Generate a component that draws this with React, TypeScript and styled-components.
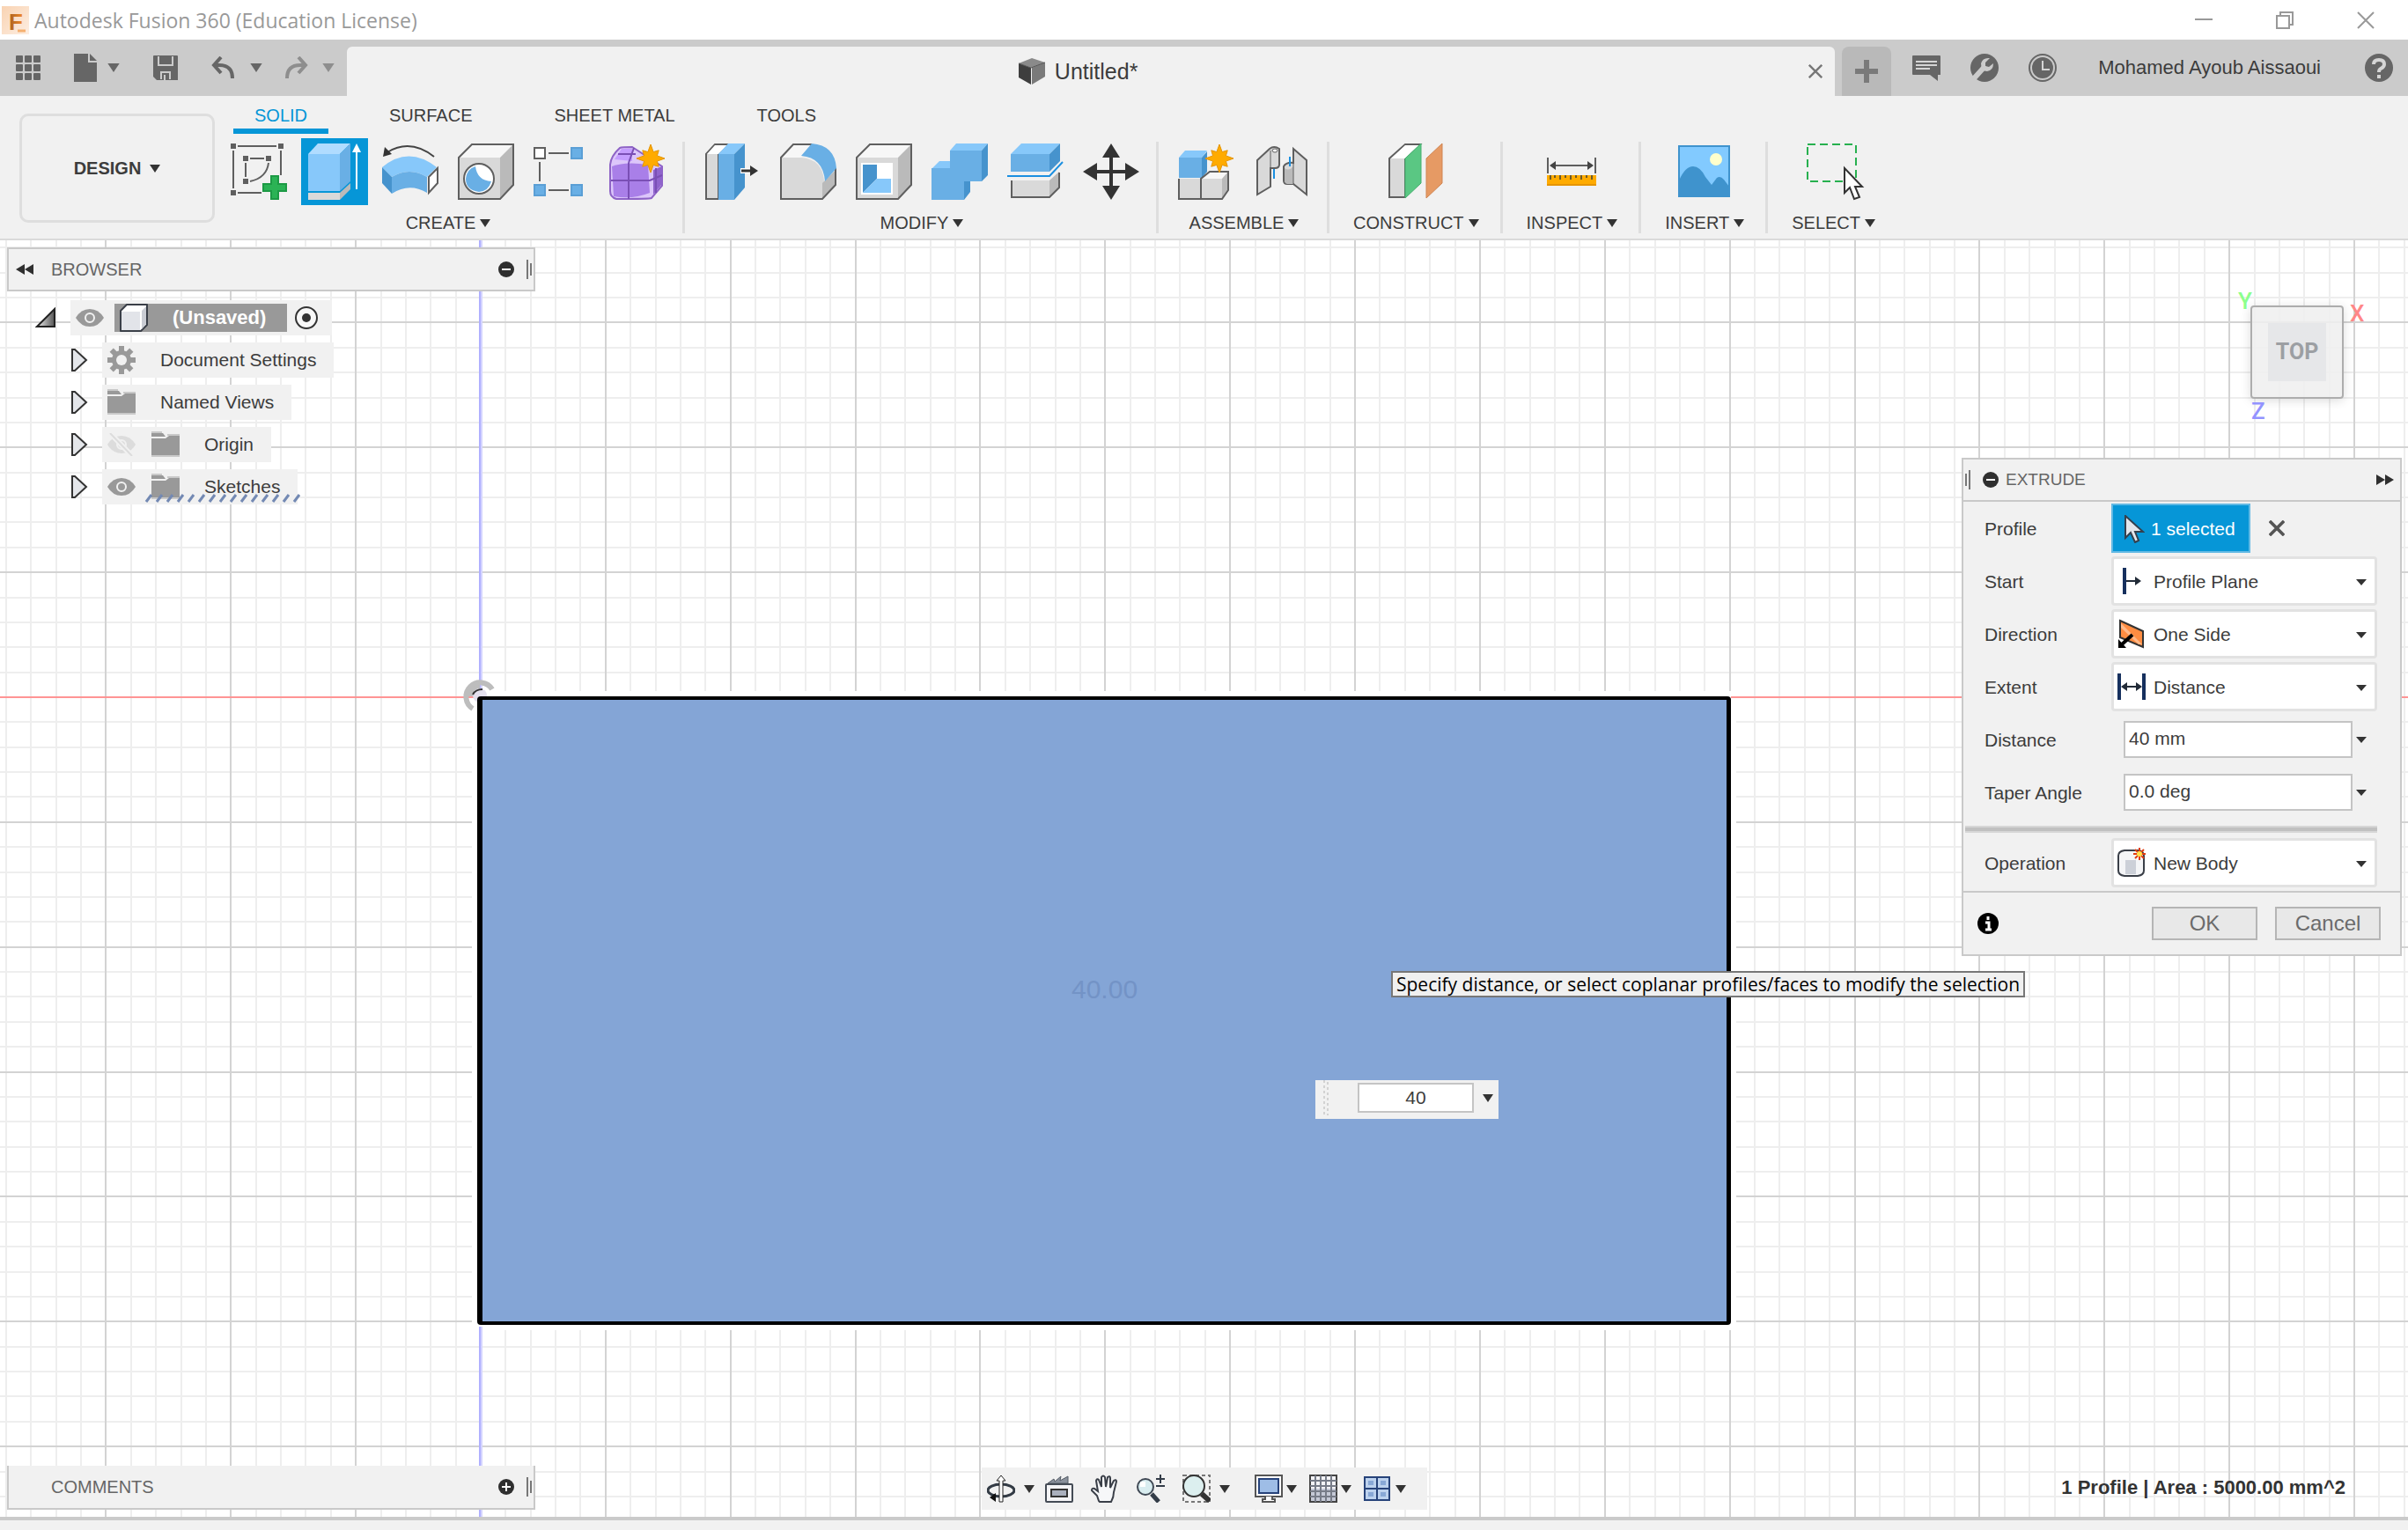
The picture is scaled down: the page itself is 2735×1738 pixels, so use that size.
import React from 'react';
import styled, { createGlobalStyle, css } from 'styled-components';

const ACCENT = '#0696d7';
const PANEL = '#f1f1f1';
const EDGE = '#c9c9c9';
const INK = '#3c3c3c';
const SANS = '"Liberation Sans", Arial, sans-serif';

const GlobalStyle = createGlobalStyle`
  *, *::before, *::after { box-sizing: border-box; }
  body { margin: 0; background: ${PANEL}; }
  button, input, select { font: inherit; color: inherit; }
  button { border: 0; padding: 0; background: none; cursor: pointer; }
  svg { display: block; flex: none; }
`;

/* ---------- shell ---------- */

const Shell = styled.div`
  display: flex;
  flex-direction: column;
  min-height: 100vh;
  font-family: ${SANS};
  font-size: 21px;
  line-height: 24px;
  color: ${INK};
  overflow: hidden;
`;

const TitleBar = styled.header`
  display: flex;
  align-items: center;
  height: 45px;
  padding: 0 2px;
  background: #fff;
  color: #999;
`;

const AppTitle = styled.h1`
  flex: 1;
  margin: 0 0 0 6px;
  font: 400 23px/30px "Open Sans", "Noto Sans", sans-serif;
`;

const WindowButton = styled.button`
  display: grid;
  place-items: center;
  width: 92px;
  height: 42px;
`;

const TabStrip = styled.div`
  display: flex;
  align-items: flex-end;
  height: 64px;
  background: #cbcbcb;
`;

const QuickBar = styled.nav`
  display: flex;
  align-items: center;
  width: 394px;
  height: 64px;
  padding-left: 18px;
  color: #666;
`;

const QuickButton = styled.button<{ $gap: number; $faded?: boolean }>`
  display: grid;
  place-items: center;
  margin-right: ${(p) => p.$gap}px;
  color: ${(p) => (p.$faded ? '#8e8e8e' : '#666')};
`;

const DocumentTab = styled.div`
  flex: 1;
  display: flex;
  align-items: center;
  height: 56px;
  padding: 0 14px 0 0;
  border-radius: 6px 6px 0 0;
  background: ${PANEL};
  font-size: 25px;
  line-height: 28px;
`;

const DocumentName = styled.div`
  flex: 1;
  display: flex;
  align-items: center;
  justify-content: center;
  gap: 10px;
`;

const NewTab = styled.button`
  display: grid;
  place-items: center;
  width: 56px;
  height: 56px;
  margin-left: 8px;
  border-radius: 8px 8px 0 0;
  background: #b9b9b9;
`;

const AccountBar = styled.div`
  display: flex;
  align-items: center;
  height: 64px;
  padding: 0 17px 0 24px;
  color: ${INK};
`;

const AccountIcons = styled.div`
  display: flex;
  gap: 34px;
  margin-right: 47px;
`;

const AccountName = styled.button`
  margin-right: 50px;
  font-size: 22px;
`;

/* ---------- ribbon ---------- */

const Ribbon = styled.section`
  display: flex;
  height: 164px;
  padding-left: 22px;
  border-bottom: 2px solid #dadada;
  background: ${PANEL};
`;

const WorkspaceButton = styled.button`
  display: flex;
  align-items: center;
  justify-content: center;
  gap: 10px;
  width: 222px;
  height: 124px;
  margin: 20px 12px 0 0;
  border: 3px solid #dedede;
  border-radius: 10px;
  font-size: 20px;
  font-weight: 700;
`;

const RibbonBody = styled.div`
  display: flex;
  flex-direction: column;
`;

const RibbonTabs = styled.nav`
  display: flex;
  gap: 45px;
  height: 48px;
  padding: 8px 0 0 9px;
`;

const RibbonTab = styled.button<{ $active?: boolean }>`
  height: 35px;
  padding: 0 24px 2px;
  border-bottom: 6px solid ${(p) => (p.$active ? ACCENT : 'transparent')};
  color: ${(p) => (p.$active ? ACCENT : INK)};
  font-size: 20px;
  line-height: 20px;
`;

const ToolGroups = styled.div`
  display: flex;
`;

const ToolGroup = styled.div`
  display: flex;
  flex-direction: column;
  align-items: center;
  gap: 8px;
  padding: 0 16px;
  background: linear-gradient(#dedede, #dedede) right 4px / 3px 104px no-repeat;

  &:first-child { padding-left: 0; }
  &:last-child { background: none; }
`;

const ToolRow = styled.div`
  display: flex;
  gap: 10px;
`;

const ToolButton = styled.button<{ $active?: boolean }>`
  display: grid;
  place-items: center;
  width: 76px;
  height: 76px;
  background: ${(p) => (p.$active ? ACCENT : 'transparent')};
`;

const GroupLabel = styled.button`
  display: flex;
  align-items: center;
  gap: 5px;
  padding: 0 11px;
  font-size: 20px;
  line-height: 24px;
`;

/* ---------- canvas ---------- */

const Canvas = styled.main`
  position: relative;
  flex: 1;
  background: #fff;
  overflow: hidden;
`;

const Drawing = styled.svg`
  position: absolute;
  inset: 0;
  width: 100%;
  height: 100%;
`;

const Overlay = styled.div`
  position: relative;
  display: flex;
  justify-content: space-between;
  padding: 8px 7px 0 8px;
`;

const BrowserColumn = styled.aside`
  width: 600px;
`;

const panelBar = css`
  display: flex;
  align-items: center;
  height: 50px;
  border: 2px solid ${EDGE};
  background: ${PANEL};
  color: #666;
  font-size: 20px;
`;

const BrowserHeader = styled.header`
  ${panelBar}
  padding: 0 2px 0 8px;
`;

const PanelTitle = styled.h2<{ $left: number; $size?: number }>`
  flex: 1;
  margin: 0 0 0 ${(p) => p.$left}px;
  font-size: ${(p) => p.$size ?? 20}px;
  font-weight: 400;
`;

const Spaced = styled.span`
  margin-left: 14px;
`;

const Tree = styled.ul`
  display: flex;
  flex-direction: column;
  align-items: flex-start;
  gap: 8px;
  margin: 0;
  padding: 10px 0 0;
  list-style: none;
`;

const TreeItem = styled.li<{ $indent: number }>`
  display: flex;
  align-items: center;
  height: 40px;
  padding-left: ${(p) => p.$indent}px;
`;

const TreeToggle = styled.button`
  margin-right: 16px;
`;

const TreeBody = styled.div`
  position: relative;
  display: flex;
  align-items: center;
  gap: 18px;
  height: 40px;
  padding: 0 20px 0 6px;
  background: ${PANEL};
`;

const TreeLabel = styled.span`
  padding-left: 10px;
`;

const RootBody = styled(TreeBody)`
  gap: 9px;
  padding-right: 16px;
`;

const RootName = styled.button`
  display: flex;
  align-items: center;
  gap: 28px;
  width: 196px;
  height: 32px;
  padding-left: 6px;
  margin-left: 3px;
  background: #999;
  color: #fff;
  font-size: 22px;
  font-weight: 700;
`;

const Hatch = styled.svg`
  position: absolute;
  left: 48px;
  bottom: 2px;
`;

const RightColumn = styled.aside`
  display: flex;
  flex-direction: column;
  align-items: flex-end;
  width: 500px;
`;

const CubeArea = styled.div`
  position: relative;
  width: 106px;
  height: 106px;
  margin: 66px 66px 67px 0;
`;

const CubeFace = styled.button`
  display: grid;
  place-items: center;
  width: 106px;
  height: 106px;
  border: 2px solid #adadad;
  border-radius: 4px;
  background: rgba(238, 238, 238, 0.85);
  box-shadow: 0 2px 12px rgba(0, 0, 0, 0.14);
  color: #9c9fa3;
  font: 700 25px/30px Roboto, sans-serif;
`;

const CubeCenter = styled.span`
  display: grid;
  place-items: center;
  width: 66px;
  height: 66px;
  background: #e6e7e9;
`;

const AxisLetter = styled.span<{ $x: number; $y: number; $color: string }>`
  position: absolute;
  left: ${(p) => p.$x}px;
  top: ${(p) => p.$y}px;
  color: ${(p) => p.$color};
  font: 500 26px/28px Roboto, sans-serif;
`;

/* ---------- extrude dialog ---------- */

const Dialog = styled.form`
  width: 500px;
  border: 2px solid ${EDGE};
  background: ${PANEL};
`;

const DialogHeader = styled.header`
  display: flex;
  align-items: center;
  height: 48px;
  padding: 0 7px 0 2px;
  border-bottom: 2px solid ${EDGE};
  color: #666;
`;

const Fields = styled.div`
  display: flex;
  flex-direction: column;
  gap: 4px;
  padding: 2px 26px 4px 24px;
`;

const Field = styled.div`
  display: grid;
  grid-template-columns: 144px 1fr;
  align-items: center;
  height: 56px;
`;

const fieldText = css`
  padding-top: 2px;
`;

const FieldLabel = styled.label`
  ${fieldText}
`;

const FieldName = styled.span`
  ${fieldText}
`;

const Inline = styled.div`
  display: flex;
  align-items: center;
`;

const SelectedButton = styled.button`
  display: flex;
  align-items: center;
  gap: 7px;
  width: 158px;
  height: 56px;
  margin-right: 21px;
  padding: 2px 0 0 12px;
  border: 2px solid #62b9e4;
  background: ${ACCENT};
  color: #fff;
`;

const SelectBox = styled.div`
  position: relative;
  height: 56px;
`;

const NativeSelect = styled.select`
  appearance: none;
  width: 100%;
  height: 56px;
  padding: 2px 40px 0 45px;
  border: 3px solid #e2e2e2;
  border-radius: 4px;
  background: #fff;
`;

const SelectIcon = styled.span`
  position: absolute;
  left: 7px;
  top: 12px;
  pointer-events: none;
`;

const SelectCaret = styled.span`
  position: absolute;
  right: 12px;
  top: 26px;
  pointer-events: none;
`;

const ValueInput = styled.input`
  width: 260px;
  height: 42px;
  margin: 0 4px 0 14px;
  padding: 0 4px 2px;
  border: 2px solid #c4c4c4;
  background: #fff;
`;

const SectionRule = styled.hr`
  width: 468px;
  height: 8px;
  margin: 6px 0 2px -22px;
  border: 2px solid #d6d6d6;
  border-width: 2px 0;
  background: #c0c0c0;
`;

const DialogFooter = styled.footer`
  display: flex;
  align-items: center;
  gap: 20px;
  height: 72px;
  padding: 0 22px 0 16px;
  border-top: 2px solid ${EDGE};
`;

const Spacer = styled.span`
  flex: 1;
`;

const DialogButton = styled.button`
  width: 120px;
  height: 38px;
  border: 2px solid #b5b5b5;
  background: #e8e8e8;
  color: #6b6b6b;
  font-size: 24px;
  line-height: 26px;
`;

/* ---------- items placed on the free canvas ---------- */

const Pinned = styled.div<{ $x: number; $y: number }>`
  position: absolute;
  left: ${(p) => p.$x}px;
  top: ${(p) => p.$y}px;
`;

const DimensionText = styled(Pinned)`
  color: #7393c6;
  font-size: 30px;
  line-height: 34px;
`;

const Hint = styled(Pinned)`
  padding: 0 4px;
  border: 2px solid #777;
  background: #f0f0f0;
  color: #000;
  font: 21px/26px "Open Sans", "Noto Sans", sans-serif;
  white-space: nowrap;
`;

const QuickValue = styled(Pinned)`
  display: flex;
  align-items: center;
  gap: 10px;
  height: 44px;
  padding: 0 6px 4px 8px;
  background: ${PANEL};
`;

const QuickInput = styled.input`
  width: 132px;
  height: 34px;
  margin-left: 22px;
  border: 2px solid #c4c4c4;
  background: #fff;
  text-align: center;
`;

/* ---------- bottom of the canvas ---------- */

const BottomBar = styled.div`
  position: absolute;
  left: 8px;
  right: 8px;
  bottom: 8px;
  display: grid;
  grid-template-columns: 1fr auto 1fr;
  align-items: end;
`;

const CommentsPanel = styled.section`
  ${panelBar}
  width: 600px;
  padding: 0 2px 0 48px;
  border-top-width: 0;
`;

const NavBar = styled.nav`
  display: flex;
  align-items: center;
  height: 48px;
  padding: 0 24px 0 6px;
  background: ${PANEL};
`;

const NavButton = styled.button<{ $gap: number }>`
  margin-right: ${(p) => p.$gap}px;
`;

const StatusText = styled.output`
  justify-self: end;
  align-self: center;
  margin-right: 63px;
  color: #333;
  font-size: 22px;
  font-weight: 700;
`;

const BottomEdge = styled.div`
  height: 15px;
  border-top: 4px solid #cacaca;
  background: ${PANEL};
`;

/* ---------- small icons ---------- */

const Caret = ({ color = '#333', w = 12, h = 9 }: { color?: string; w?: number; h?: number }) => (
  <svg width={w} height={h} viewBox="0 0 12 9"><path d="M0 0H12L6 9Z" fill={color} /></svg>
);

const FlatCaret = () => (
  <svg width="12" height="7" viewBox="0 0 12 7"><path d="M0 0H12L6 7Z" fill="#333" /></svg>
);

const AppLogo = () => (
  <svg width="31" height="32" viewBox="0 0 31 32">
    <defs>
      <linearGradient id="logoBg" x1="0" y1="0" x2="1" y2="1">
        <stop offset="0" stopColor="#f9d3b2" /><stop offset="1" stopColor="#fdeee2" />
      </linearGradient>
      <linearGradient id="logoInk" x1="0" y1="0" x2="1" y2="0">
        <stop offset="0" stopColor="#a9601f" /><stop offset="1" stopColor="#f08a2c" />
      </linearGradient>
    </defs>
    <rect width="31" height="32" fill="url(#logoBg)" />
    <text x="8" y="27" fontFamily="Liberation Sans" fontSize="26" fontWeight="700" fill="url(#logoInk)">F</text>
    <path d="M18 28H27" stroke="#f5b070" strokeWidth="3" />
  </svg>
);

const GridIcon = () => (
  <svg width="28" height="28" viewBox="0 0 28 28" fill="#666">
    {[0, 10, 20].map((x) => [0, 10, 20].map((y) => <rect key={`${x}-${y}`} x={x} y={y} width="8" height="8" rx="1" />))}
  </svg>
);
const FileIcon = () => (
  <svg width="26" height="32" viewBox="0 0 26 32" fill="#666"><path d="M0 0H16V10H26V32H0Z" /><path d="M18 0L26 8H18Z" /></svg>
);
const SaveIcon = () => (
  <svg width="28" height="28" viewBox="0 0 28 28">
    <path d="M1 0H27Q28 0 28 1V28H4L0 24V1Q0 0 1 0Z" fill="#666" />
    <path d="M6 1V11H22V1M9 27V19H19V27" fill="none" stroke="#cbcbcb" strokeWidth="2" /><path d="M13 22V28" stroke="#cbcbcb" strokeWidth="2" />
  </svg>
);
const UndoIcon = ({ flip }: { flip?: boolean }) => (
  <svg width="26" height="26" viewBox="0 0 26 26" fill="none" stroke="currentColor" strokeWidth="4">
    <g transform={flip ? 'translate(26 0) scale(-1 1)' : undefined}>
      <path d="M11 1L3 10L11 19" /><path d="M3 10H9Q24 10 24 25" />
    </g>
  </svg>
);
const DocCube = () => (
  <svg width="32" height="32" viewBox="0 0 32 32">
    <path d="M1 7L16 1L31 6L16 12Z" fill="#8a8a8a" /><path d="M1 7L15 12V31L1 23Z" fill="#3e3e3e" />
    <path d="M16 12L31 6V22L16 31Z" fill="#7a7a7a" /><path d="M1 7L15 12L31 6" fill="none" stroke="#555" />
  </svg>
);
const Cross = ({ size, w, color }: { size: number; w: number; color: string }) => (
  <svg width={size} height={size} viewBox="0 0 20 20"><path d="M1 1L19 19M19 1L1 19" stroke={color} strokeWidth={w} /></svg>
);
const ChatIcon = () => (
  <svg width="32" height="32" viewBox="0 0 32 32">
    <path d="M1 2H31Q32 2 32 3V24H29V31L20 24H1Q0 24 0 23V3Q0 2 1 2Z" fill="#666" />
    <path d="M4 9H28M4 13H28M4 17H20" stroke="#d5d5d5" strokeWidth="2" />
  </svg>
);
const WrenchIcon = () => (
  <svg width="32" height="32" viewBox="0 0 32 32">
    <circle cx="16" cy="16" r="16" fill="#666" />
    <path d="M5 27L15 16" stroke="#cbcbcb" strokeWidth="6" strokeLinecap="round" />
    <path d="M22 5Q14 4 12 11Q12 20 19 20Q26 19 26 11L21 15L17 14V10Z" fill="#cbcbcb" />
  </svg>
);
const ClockIcon = () => (
  <svg width="32" height="32" viewBox="0 0 32 32">
    <circle cx="16" cy="16" r="15" fill="none" stroke="#666" strokeWidth="2" /><circle cx="16" cy="16" r="12" fill="#666" />
    <path d="M16 8V18H24" fill="none" stroke="#d5d5d5" strokeWidth="2" />
  </svg>
);
const HelpIcon = () => (
  <svg width="32" height="32" viewBox="0 0 32 32">
    <circle cx="16" cy="16" r="16" fill="#666" />
    <path d="M10 12Q10 7 16 7Q22 7 22 12Q22 15 18 17Q16 18 16 21" fill="none" stroke="#d5d5d5" strokeWidth="4" />
    <rect x="14" y="24" width="4" height="4" fill="#d5d5d5" />
  </svg>
);
const RoundSign = ({ plus }: { plus?: boolean }) => (
  <svg width="18" height="18" viewBox="0 0 18 18">
    <circle cx="9" cy="9" r="9" fill="#2f2f2f" /><path d={plus ? 'M4 9H14M9 4V14' : 'M4 9H14'} stroke="#fff" strokeWidth="2" />
  </svg>
);
const Grip = ({ flip }: { flip?: boolean }) => (
  <svg width="6" height="22" viewBox="0 0 6 22" stroke="#777" strokeWidth="2">
    <path d={flip ? 'M5 0V22M1 4V18' : 'M1 0V22M5 4V18'} />
  </svg>
);
const DoubleArrow = ({ flip }: { flip?: boolean }) => (
  <svg width="20" height="12" viewBox="0 0 20 12" fill="#2f2f2f">
    <path d={flip ? 'M0 0L10 6V0L20 6L10 12V6L0 12Z' : 'M20 0L10 6V0L0 6L10 12V6L20 12Z'} />
  </svg>
);
const EyeIcon = ({ hidden }: { hidden?: boolean }) => {
  const c = hidden ? '#dcdcdc' : '#999';
  return (
    <svg width="32" height="26" viewBox="0 0 32 26">
      <path d="M0 13Q6 3 16 3Q26 3 32 13Q26 23 16 23Q6 23 0 13Z" fill={c} />
      <circle cx="16" cy="13" r="5" fill="none" stroke="#f1f1f1" strokeWidth="2" />
      {hidden && <><path d="M3 0L28 26" stroke="#f1f1f1" strokeWidth="6" /><path d="M3 0L28 26" stroke={c} strokeWidth="2" /></>}
    </svg>
  );
};
const FolderIcon = () => (
  <svg width="32" height="30" viewBox="0 0 32 30">
    <path d="M0 1H12M18 4H32" stroke="#c9c9c9" strokeWidth="2" />
    <path d="M0 2H13L16 6H0Z" fill="#999" /><path d="M0 8H16L20 5H32V27H0Z" fill="#999" /><path d="M0 28H32" stroke="#c9c9c9" strokeWidth="2" />
  </svg>
);
const GearIcon = () => (
  <svg width="32" height="32" viewBox="0 0 32 32">
    {[0, 45, 90, 135].map((a) => <rect key={a} x="13" y="0" width="6" height="32" fill="#999" transform={`rotate(${a} 16 16)`} />)}
    <circle cx="16" cy="16" r="11" fill="#999" /><circle cx="16" cy="16" r="6" fill="#f1f1f1" />
  </svg>
);
const ExpandedIcon = () => (
  <svg width="24" height="24" viewBox="0 0 24 24">
    <defs><linearGradient id="tri" x1="0" y1="0" x2="1" y2="0"><stop offset="0" stopColor="#eee" /><stop offset="1" stopColor="#555" /></linearGradient></defs>
    <path d="M2 22L22 2V22Z" fill="url(#tri)" stroke="#222" strokeWidth="2" />
  </svg>
);
const CollapsedIcon = () => (
  <svg width="20" height="28" viewBox="0 0 20 28"><path d="M2 2H5L18 14L5 26H2Z" fill="#e4e6ea" stroke="#333" strokeWidth="2" /></svg>
);
const SmallCube = () => (
  <svg width="32" height="32" viewBox="0 0 32 32" strokeWidth="2" stroke="#3a3f48" strokeLinejoin="round">
    <path d="M1 8L8 1H31V24L24 31H1Z" fill="#fff" /><path d="M2 9H23V30H2Z" fill="#e2e4e9" stroke="none" /><path d="M25 8L30 3V23L25 29Z" fill="#c9ccd3" stroke="none" />
  </svg>
);
const ActiveDot = () => (
  <svg width="26" height="26" viewBox="0 0 26 26"><circle cx="13" cy="13" r="12" fill="#f8f8f8" stroke="#333" strokeWidth="2" /><circle cx="13" cy="13" r="5" fill="#333" /></svg>
);

/* ---------- ribbon icons, 64 x 64 ---------- */

const BL = '#87c8fa';
const BM = '#69afe5';
const BD = '#4693cd';
const GR = '#d9d9d9';
const GD = '#bababa';
const LN = '#5f5f5f';

const Star = ({ x, y }: { x: number; y: number }) => (
  <path
    transform={`translate(${x} ${y})`}
    d={Array.from({ length: 16 }, (_, i) => {
      const r = i % 2 ? 8 : i % 4 ? 13 : 16;
      const a = (i * Math.PI) / 8;
      return `${i ? 'L' : 'M'}${(r * Math.sin(a)).toFixed(1)} ${(-r * Math.cos(a)).toFixed(1)}`;
    }).join('') + 'Z'}
    fill="#ffab00" stroke="#e59400" strokeWidth="1"
  />
);

const art: Record<string, React.ReactNode> = {
  sketch: (
    <>
      <g fill={LN}>
        <rect width="6" height="6" /><rect x="54" width="6" height="6" /><rect y="53" width="6" height="6" />
        <rect x="14" y="14" width="6" height="6" /><rect x="40" y="14" width="6" height="6" /><rect x="14" y="40" width="6" height="6" />
      </g>
      <path d="M8 3H52M3 8V51M57 8V36M8 56H35M22 17H38M17 22V38M43 22Q41 39 22 43" fill="none" stroke={LN} strokeWidth="2" />
      <path d="M46 37H54V46H63V54H54V63H46V54H37V46H46Z" fill="#2bb355" stroke="#1d9a45" strokeWidth="2" />
    </>
  ),
  extrude: (
    <>
      <path d="M2 12L13 0H50L38 12Z" fill="#b0dcff" /><path d="M2 12H38V54H2Z" fill={BL} /><path d="M38 12L50 0V43L38 54Z" fill={BM} />
      <path d="M2 56H38V64H2Z" fill={GR} /><path d="M38 56L50 45V52L38 64Z" fill={GD} />
      <path d="M57 8V52" stroke="#fff" strokeWidth="2" /><path d="M57 0L62 10H52Z" fill="#fff" />
    </>
  ),
  revolve: (
    <>
      <path d="M0 27Q30 2 62 27L51 38Q31 26 11 38Z" fill={BL} /><path d="M11 38Q31 26 51 38V56Q31 44 11 57Z" fill={BM} />
      <path d="M0 27L11 38V57L0 45Z" fill={BD} /><path d="M53 38L63 28V45L53 56Z" fill="#fff" stroke={LN} strokeWidth="2" />
      <path d="M59 15Q32 -6 6 10" fill="none" stroke="#444" strokeWidth="2" /><path d="M1 15L3 4L11 12Z" fill="#333" />
    </>
  ),
  hole: (
    <>
      <path d="M1 16L16 1H63L48 16Z" fill="#f7f7f7" /><path d="M1 16H48V63H1Z" fill={GR} /><path d="M48 16L63 1V47L48 63Z" fill={GD} />
      <path d="M1 16L16 1H63V47L48 63H1Z" fill="none" stroke={LN} strokeWidth="2" />
      <circle cx="24" cy="40" r="17" fill="#fff" stroke={LN} strokeWidth="2" />
      <path d="M20 26Q22 42 38 43Q35 54 24 55Q9 53 9 40Q10 29 20 26Z" fill={BM} />
    </>
  ),
  pattern: (
    <>
      <rect x="1" y="5" width="12" height="12" fill="#fff" stroke={LN} strokeWidth="2" />
      {[[43, 5], [1, 47], [43, 47]].map(([x, y]) => <rect key={`${x}-${y}`} x={x} y={y} width="12" height="12" fill={BM} stroke="#5a9fd6" strokeWidth="2" />)}
      <path d="M17 11H40M17 53H40M7 21V43" stroke={LN} strokeWidth="2" />
    </>
  ),
  form: (
    <>
      <path d="M1 24Q2 14 12 5Q14 4 26 4L60 26V48L48 62Q46 63 8 63Q1 61 1 54Z" fill="#dcc6fa" stroke="#8e63c6" strokeWidth="2" />
      <path d="M3 26Q18 20 44 24L46 56Q26 64 5 60Z" fill="#a97fe8" /><path d="M6 18L14 6H26V20Z" fill="#c49cff" />
      <path d="M50 30L60 26V46L50 58Z" fill="#8f63cc" />
      <path d="M2 42H46L60 36M22 22V63M22 22L28 5M10 12H30M53 28V56" fill="none" stroke="#7a4fb5" strokeWidth="2" />
      <Star x={47} y={17} />
    </>
  ),
  pressPull: (
    <>
      <path d="M2 12L12 1H27L16 12V63H2Z" fill={GR} stroke={LN} strokeWidth="2" /><path d="M3 12L12 2H26L16 12Z" fill="#fff" />
      <path d="M16 12L27 0H46L34 12Z" fill={BL} /><path d="M16 12H34V64H16Z" fill={BM} /><path d="M34 12L46 0V50L34 64Z" fill={BD} />
      <path d="M41 31H54" stroke="#fff" strokeWidth="6" /><path d="M42 31H54" stroke="#333" strokeWidth="3" /><path d="M52 25L61 31L52 37Z" fill="#333" />
    </>
  ),
  fillet: (
    <>
      <path d="M1 16L15 1H36L24 16Z" fill="#f7f7f7" /><path d="M1 16H24Q48 18 50 42L48 63H1Z" fill={GR} /><path d="M48 45L63 30V47L48 63Z" fill={GD} />
      <path d="M36 1H15L1 16V63H48L63 47V28" fill="none" stroke={LN} strokeWidth="2" />
      <path d="M24 14L36 0Q62 2 64 28L51 43Q49 16 24 14Z" fill={BM} />
    </>
  ),
  shell: (
    <>
      <path d="M1 16L16 1H63L48 16Z" fill="#f7f7f7" /><path d="M1 16H48V63H1Z" fill={GR} /><path d="M48 16L63 1V47L48 63Z" fill={GD} />
      <path d="M1 16L16 1H63V47L48 63H1Z" fill="none" stroke={LN} strokeWidth="2" /><rect x="6" y="22" width="36" height="36" fill="#fff" />
      <path d="M8 24H24V40L8 56Z" fill={BD} /><path d="M8 56L24 40H40V56Z" fill={BL} />
    </>
  ),
  combine: (
    <>
      <path d="M1 28L9 20H21V28ZM21 8L28 0H64L57 8Z" fill={BL} /><path d="M0 28H21V8H57V43H37V64H0Z" fill={BM} />
      <path d="M57 8L64 0V36L57 43ZM37 43H44V55L37 64Z" fill={BD} />
    </>
  ),
  split: (
    <>
      <path d="M4 12L16 0H60L48 12Z" fill={BL} /><path d="M4 12H48V32H4Z" fill={BM} /><path d="M48 12L60 0V20L48 32Z" fill={BD} />
      <path d="M5 42V61H48L59 50V34L48 42" fill={GR} /><path d="M48 42L59 32V50L48 61Z" fill={GD} />
      <path d="M5 42V61H48L59 50V33" fill="none" stroke={LN} strokeWidth="2" /><path d="M0 37H48L63 21" fill="none" stroke="#1b8fe0" strokeWidth="2" />
    </>
  ),
  move: (
    <>
      <path d="M32 10V54M10 32H54" stroke="#333" strokeWidth="4" />
      <path d="M32 0L42 16H22ZM32 64L42 48H22ZM0 32L16 22V42ZM64 32L48 22V42Z" fill="#333" />
    </>
  ),
  component: (
    <>
      <path d="M1 16L8 8H33L27 16Z" fill={BL} /><path d="M1 16H27V39H1Z" fill={BM} /><path d="M27 16L33 9V32L27 39Z" fill={BD} />
      <path d="M27 40L35 32H57L50 40Z" fill="#f7f7f7" /><path d="M1 40H50V63H1Z" fill={GR} /><path d="M50 40L57 32V53L50 63Z" fill={GD} />
      <path d="M1 40V63H50L57 53V32H36L26 40V63" fill="none" stroke={LN} strokeWidth="2" /><Star x={47} y={17} />
    </>
  ),
  joint: (
    <>
      <path d="M4 19L18 6Q23 2 29 6V24Q29 28 24 28H19V49L4 58Z" fill={GR} stroke={LN} strokeWidth="2" />
      <path d="M45 6L60 19V58L45 46H38Q34 46 34 42V26Q37 21 45 22Z" fill={GR} stroke={LN} strokeWidth="2" />
      <path d="M35 28Q40 32 45 26V46H38Q35 45 35 42Z" fill={GD} /><path d="M19 8V28M45 22V46" stroke={LN} strokeWidth="1" />
      <ellipse cx="24" cy="8" rx="3" ry="2" fill="#fff" stroke={LN} /><path d="M23 29V40M41 15V26" stroke="#1b8fe0" strokeWidth="2" />
    </>
  ),
  construct: (
    <>
      <path d="M2 17L20 1H37L20 17V61H2Z" fill={GR} stroke={LN} strokeWidth="2" /><path d="M4 17L20 2H36L20 17Z" fill="#fff" />
      <path d="M20 17L38 0V45L20 62Z" fill="#5ac783" stroke="#44b06e" /><path d="M44 17L62 0V45L44 62Z" fill="#e69a64" stroke="#d08552" />
    </>
  ),
  inspect: (
    <>
      <path d="M5 16V34M59 16V34M10 25H54" stroke={LN} strokeWidth="2" /><path d="M7 25L14 20V30ZM57 25L50 20V30Z" fill="#444" />
      <rect x="4" y="36" width="56" height="12" fill="#ffab00" /><path d="M4 47H60" stroke="#e59400" strokeWidth="2" />
      <path d="M8 36V41M13 36V39M19 36V41M25 36V39M31 36V41M37 36V39M43 36V41M49 36V39M55 36V41" stroke="#6d5a2a" strokeWidth="2" />
    </>
  ),
  insert: (
    <>
      <rect x="3" y="3" width="57" height="57" fill="#82caff" stroke="#3f93cd" strokeWidth="2" /><circle cx="45" cy="18" r="7" fill="#ffffcc" />
      <path d="M3 42Q10 26 19 26Q27 26 33 38L40 47L46 39Q50 36 54 41L60 49V60H3Z" fill="#3f93cd" />
    </>
  ),
  select: (
    <>
      <rect x="2" y="1" width="55" height="42" fill="none" stroke="#27b04f" strokeWidth="2" strokeDasharray="9 5" />
      <path d="M44 28V56L50 50L55 63L61 61L56 49H64Z" fill="#fff" stroke="#333" strokeWidth="2" />
    </>
  ),
};

const Art = ({ name }: { name: string }) => (
  <svg width="64" height="64" viewBox="0 0 64 64" overflow="visible">{art[name]}</svg>
);

const groups: { label: string; tools: string[] }[] = [
  { label: 'CREATE', tools: ['sketch', 'extrude', 'revolve', 'hole', 'pattern', 'form'] },
  { label: 'MODIFY', tools: ['pressPull', 'fillet', 'shell', 'combine', 'split', 'move'] },
  { label: 'ASSEMBLE', tools: ['component', 'joint'] },
  { label: 'CONSTRUCT', tools: ['construct'] },
  { label: 'INSPECT', tools: ['inspect'] },
  { label: 'INSERT', tools: ['insert'] },
  { label: 'SELECT', tools: ['select'] },
];

/* ---------- navigation icons, 32 x 32 ---------- */

const navArt: Record<string, React.ReactNode> = {
  Orbit: (
    <>
      <ellipse cx="16" cy="18" rx="15" ry="7" fill="none" stroke="#333b45" strokeWidth="3" />
      <path d="M14 31V7H11L16 1L21 7H18V31Z" fill="#fff" stroke="#222" strokeWidth="1" /><path d="M3 26L10 21V31Z" fill="#111" />
    </>
  ),
  'Look At': (
    <>
      <path d="M3 10L10 5L11 8L18 2L17 7L26 2V10Z" fill="#8a919c" stroke="#555c66" /><rect x="1" y="11" width="30" height="20" rx="1" fill="#f4f4f6" stroke="#444b55" strokeWidth="2" />
      <rect x="7" y="17" width="18" height="8" fill="#aab0bd" stroke="#333" strokeWidth="2" />
    </>
  ),
  Pan: (
    <path d="M9 30L7 24L1 18Q1 15 4 16L8 19L6 7Q7 4 9 6L12 14L12 3Q14 0 16 3L17 14L19 3Q22 1 22 4L22 15L26 7Q29 5 29 8L26 20Q26 26 23 31H10Z" fill="#f6f7f9" stroke="#3a3f48" strokeWidth="2" />
  ),
  Zoom: (
    <>
      <circle cx="10" cy="14" r="9" fill="#d9edf0" stroke="#3f4854" strokeWidth="2" /><rect x="4" y="8" width="6" height="6" fill="#fff" />
      <path d="M17 22L25 31" stroke="#333c48" strokeWidth="5" /><path d="M22 5H32M27 0V10M22 13H32" stroke="#333c48" strokeWidth="2" />
    </>
  ),
  Fit: (
    <>
      <rect x="1" y="1" width="30" height="30" fill="none" stroke="#777" strokeWidth="2" strokeDasharray="4 3" />
      <circle cx="13" cy="13" r="12" fill="#dcefef" stroke="#333" strokeWidth="2" /><path d="M22 22L31 30" stroke="#333" strokeWidth="6" />
    </>
  ),
  'Display Settings': (
    <>
      <rect x="1" y="1" width="30" height="24" fill="#fff" stroke="#555" strokeWidth="2" /><rect x="5" y="5" width="22" height="16" fill="#9ebde6" stroke="#27437a" strokeWidth="2" />
      <path d="M12 25V28H9V31H23V28H20V25" fill="#fff" stroke="#555" strokeWidth="2" />
    </>
  ),
  'Grid and Snaps': (
    <>
      <rect x="1" y="1" width="30" height="30" fill="#f3f3f6" stroke="#444" strokeWidth="2" /><rect x="2" y="16" width="28" height="14" fill="#c5c9d6" />
      <path d="M7 1V31M13 1V31M19 1V31M25 1V31M1 7H31M1 13H31M1 19H31M1 25H31" stroke="#777c88" strokeWidth="2" />
    </>
  ),
  Viewports: (
    <>
      <rect x="1" y="3" width="28" height="26" fill="#bdd2ee" stroke="#27437a" strokeWidth="2" /><path d="M15 3V29M1 16H29" stroke="#27437a" strokeWidth="2" />
      <path d="M5 7H11V12H5ZM19 7H25V12H19ZM5 20H11V25H5ZM19 20H25V25H19Z" fill="#88a8d6" />
    </>
  ),
};

const navItems: { name: string; gap: number; menu?: number }[] = [
  { name: 'Orbit', gap: 10, menu: 12 },
  { name: 'Look At', gap: 20 },
  { name: 'Pan', gap: 20 },
  { name: 'Zoom', gap: 20 },
  { name: 'Fit', gap: 10, menu: 28 },
  { name: 'Display Settings', gap: 4, menu: 14 },
  { name: 'Grid and Snaps', gap: 4, menu: 14 },
  { name: 'Viewports', gap: 6, menu: 0 },
];

/* ---------- dialog icons ---------- */

const fieldArt: Record<string, React.ReactNode> = {
  start: <><path d="M8 1V31" stroke="#16305e" strokeWidth="4" /><path d="M10 16H22" stroke="#222b38" strokeWidth="2" /><path d="M20 11L27 16L20 21Z" fill="#222b38" /></>,
  direction: (
    <>
      <path d="M3 1L29 13V31L3 20Z" fill="#ff8d42" stroke="#333" strokeWidth="2" /><path d="M4 9L24 28H28L4 4Z" fill="#ffb98a" />
      <path d="M17 17L5 28" stroke="#000" strokeWidth="4" /><path d="M1 22V32H10Z" fill="#000" />
    </>
  ),
  extent: <><path d="M2 1V31M30 1V31" stroke="#16305e" strokeWidth="4" /><path d="M7 16H25" stroke="#222b38" strokeWidth="2" /><path d="M4 16L11 11V21ZM28 16L21 11V21Z" fill="#222b38" /></>,
  body: (
    <>
      <path d="M1 8Q1 3 8 2H23Q30 3 30 8V25Q30 30 23 31H8Q1 30 1 25Z" fill="#f4f5f7" stroke="#3a3f48" strokeWidth="2" />
      <rect x="9" y="13" width="12" height="16" fill="#ccd0d8" /><path d="M25 -1V13M18 6H32M20 1L30 11M30 1L20 11" stroke="#e23c10" strokeWidth="2" /><circle cx="25" cy="6" r="3" fill="#ffe14a" />
    </>
  ),
};

const Dropdown = ({ id, label, value, icon }: { id: string; label: string; value: string; icon: string }) => (
  <Field>
    <FieldLabel htmlFor={id}>{label}</FieldLabel>
    <SelectBox>
      <NativeSelect id={id} defaultValue={value}><option>{value}</option></NativeSelect>
      <SelectIcon><svg width="32" height="32" viewBox="0 0 32 32" overflow="visible">{fieldArt[icon]}</svg></SelectIcon>
      <SelectCaret><FlatCaret /></SelectCaret>
    </SelectBox>
  </Field>
);

const Amount = ({ id, label, value }: { id: string; label: string; value: string }) => (
  <Field>
    <FieldLabel htmlFor={id}>{label}</FieldLabel>
    <Inline>
      <ValueInput id={id} defaultValue={value} />
      <button type="button" aria-label={`${label} options`}><FlatCaret /></button>
    </Inline>
  </Field>
);

/* ---------- sketch drawing ---------- */

const ORIGIN = { x: 546, y: 519 };
const MAJOR = 141.87;

function gridPath(step: number, skip: number) {
  let d = '';
  for (let i = -40; i < 160; i++) {
    if (skip && i % skip === 0) continue;
    const x = Math.round(ORIGIN.x + i * step);
    const y = Math.round(ORIGIN.y + i * step);
    if (x > 0 && x < 4200) d += `M${x} 0V3000`;
    if (y > 0 && y < 3000) d += `M0 ${y}H4200`;
  }
  return d;
}

const SketchDrawing = () => (
  <Drawing aria-hidden="true">
    <path d={gridPath(MAJOR / 5, 5)} stroke="#eeeeee" strokeWidth="2" shapeRendering="crispEdges" />
    <path d={gridPath(MAJOR, 0)} stroke="#d3d3d3" strokeWidth="2" shapeRendering="crispEdges" />
    <rect x="536" y="512" width="1436" height="726" fill="#fff" />
    <path d="M0 519H544M1966 519H4200" stroke="#ff9494" strokeWidth="2" shapeRendering="crispEdges" />
    <path d="M545 0V519M545 1234V3000" stroke="#b0b0ff" strokeWidth="2" shapeRendering="crispEdges" />
    <path d="M547 0V519M547 1234V3000" stroke="#d4d4ff" strokeWidth="2" shapeRendering="crispEdges" />
    <path d="M545 518H529A16 16 0 0 1 545 502Z" fill="#bdbdbd" />
    <path d="M537 532A16 16 0 1 1 559 510" fill="none" stroke="#bdbdbd" strokeWidth="6" />
    <circle cx="545" cy="517" r="8" fill="#e4e0ee" />
    <path d="M537 516Q540 510 548 510" fill="none" stroke="#333" strokeWidth="2" />
    <rect x="542" y="518" width="1424" height="714" rx="4" fill="#000" />
    <rect x="548" y="522" width="1413" height="706" fill="#84a5d6" />
  </Drawing>
);

/* ---------- page ---------- */

export default function App() {
  return (
    <Shell>
      <GlobalStyle />
      <TitleBar>
        <AppLogo />
        <AppTitle>Autodesk Fusion 360 (Education License)</AppTitle>
        <WindowButton aria-label="Minimize"><svg width="20" height="20" viewBox="0 0 20 20"><path d="M0 9H20" stroke="#999" strokeWidth="2" /></svg></WindowButton>
        <WindowButton aria-label="Restore"><svg width="20" height="20" viewBox="0 0 20 20" fill="none" stroke="#999" strokeWidth="2"><path d="M1 5H15V19H1ZM5 5V1H19V15H15" /></svg></WindowButton>
        <WindowButton aria-label="Close"><Cross size={20} w={2} color="#999" /></WindowButton>
      </TitleBar>

      <TabStrip>
        <QuickBar>
          <QuickButton $gap={38} aria-label="Data panel"><GridIcon /></QuickButton>
          <QuickButton $gap={12} aria-label="File"><FileIcon /></QuickButton>
          <QuickButton $gap={38} aria-label="File menu"><Caret color="#666" w={14} h={10} /></QuickButton>
          <QuickButton $gap={38} aria-label="Save"><SaveIcon /></QuickButton>
          <QuickButton $gap={18} aria-label="Undo"><UndoIcon /></QuickButton>
          <QuickButton $gap={26} aria-label="Undo history"><Caret color="#666" w={14} h={10} /></QuickButton>
          <QuickButton $gap={16} $faded aria-label="Redo"><UndoIcon flip /></QuickButton>
          <QuickButton $gap={0} $faded aria-label="Redo history"><Caret color="#8e8e8e" w={14} h={10} /></QuickButton>
        </QuickBar>
        <DocumentTab>
          <DocumentName><DocCube /><span>Untitled*</span></DocumentName>
          <button aria-label="Close document"><Cross size={16} w={3} color="#777" /></button>
        </DocumentTab>
        <NewTab aria-label="New design"><svg width="26" height="26" viewBox="0 0 26 26"><path d="M13 0V26M0 13H26" stroke="#7a7a7a" strokeWidth="6" /></svg></NewTab>
        <AccountBar>
          <AccountIcons>
            <button aria-label="Comments"><ChatIcon /></button>
            <button aria-label="Extensions"><WrenchIcon /></button>
            <button aria-label="Job status"><ClockIcon /></button>
          </AccountIcons>
          <AccountName>Mohamed Ayoub Aissaoui</AccountName>
          <button aria-label="Help"><HelpIcon /></button>
        </AccountBar>
      </TabStrip>

      <Ribbon>
        <WorkspaceButton>DESIGN <Caret /></WorkspaceButton>
        <RibbonBody>
          <RibbonTabs>
            <RibbonTab $active>SOLID</RibbonTab>
            <RibbonTab>SURFACE</RibbonTab>
            <RibbonTab>SHEET METAL</RibbonTab>
            <RibbonTab>TOOLS</RibbonTab>
          </RibbonTabs>
          <ToolGroups>
            {groups.map((g) => (
              <ToolGroup key={g.label}>
                <ToolRow>
                  {g.tools.map((t) => (
                    <ToolButton key={t} $active={t === 'extrude'} aria-label={t}><Art name={t} /></ToolButton>
                  ))}
                </ToolRow>
                <GroupLabel>{g.label} <Caret /></GroupLabel>
              </ToolGroup>
            ))}
          </ToolGroups>
        </RibbonBody>
      </Ribbon>

      <Canvas>
        <SketchDrawing />
        <Overlay>
          <BrowserColumn>
            <BrowserHeader>
              <button aria-label="Collapse browser"><DoubleArrow /></button>
              <PanelTitle $left={20}>BROWSER</PanelTitle>
              <RoundSign />
              <Spaced><Grip /></Spaced>
            </BrowserHeader>
            <Tree>
              <TreeItem $indent={32}>
                <TreeToggle aria-label="Collapse"><ExpandedIcon /></TreeToggle>
                <RootBody>
                  <EyeIcon />
                  <RootName><SmallCube />(Unsaved)</RootName>
                  <ActiveDot />
                </RootBody>
              </TreeItem>
              <TreeItem $indent={72}>
                <TreeToggle aria-label="Expand"><CollapsedIcon /></TreeToggle>
                <TreeBody><GearIcon /><TreeLabel>Document Settings</TreeLabel></TreeBody>
              </TreeItem>
              <TreeItem $indent={72}>
                <TreeToggle aria-label="Expand"><CollapsedIcon /></TreeToggle>
                <TreeBody><FolderIcon /><TreeLabel>Named Views</TreeLabel></TreeBody>
              </TreeItem>
              <TreeItem $indent={72}>
                <TreeToggle aria-label="Expand"><CollapsedIcon /></TreeToggle>
                <TreeBody><EyeIcon hidden /><FolderIcon /><TreeLabel>Origin</TreeLabel></TreeBody>
              </TreeItem>
              <TreeItem $indent={72}>
                <TreeToggle aria-label="Expand"><CollapsedIcon /></TreeToggle>
                <TreeBody>
                  <EyeIcon /><FolderIcon /><TreeLabel>Sketches</TreeLabel>
                  <Hatch width="178" height="10" viewBox="0 0 178 10">
                    <path d={Array.from({ length: 15 }, (_, i) => `M${2 + i * 12} 9L${8 + i * 12} 1`).join('')} stroke="#7389b3" strokeWidth="3" />
                  </Hatch>
                </TreeBody>
              </TreeItem>
            </Tree>
          </BrowserColumn>

          <RightColumn>
            <CubeArea>
              <CubeFace><CubeCenter>TOP</CubeCenter></CubeFace>
              <AxisLetter $x={-14} $y={-19} $color="#8cff8c">Y</AxisLetter>
              <AxisLetter $x={113} $y={-5} $color="#ff8787">X</AxisLetter>
              <AxisLetter $x={1} $y={106} $color="#9393ff">Z</AxisLetter>
            </CubeArea>
            <Dialog onSubmit={(e) => e.preventDefault()}>
              <DialogHeader>
                <Grip flip />
                <Spaced><RoundSign /></Spaced>
                <PanelTitle $left={8} $size={19}>EXTRUDE</PanelTitle>
                <button type="button" aria-label="Collapse dialog"><DoubleArrow flip /></button>
              </DialogHeader>
              <Fields>
                <Field>
                  <FieldName>Profile</FieldName>
                  <Inline>
                    <SelectedButton type="button">
                      <svg width="24" height="32" viewBox="0 0 24 32"><path d="M2 1V26L8 20L13 31L17 29L13 19H22Z" fill="#e4e6ec" stroke="#34404e" strokeWidth="2" /></svg>
                      1 selected
                    </SelectedButton>
                    <button type="button" aria-label="Clear selection"><Cross size={18} w={4} color="#555" /></button>
                  </Inline>
                </Field>
                <Dropdown id="start" label="Start" value="Profile Plane" icon="start" />
                <Dropdown id="direction" label="Direction" value="One Side" icon="direction" />
                <Dropdown id="extent" label="Extent" value="Distance" icon="extent" />
                <Amount id="distance" label="Distance" value="40 mm" />
                <Amount id="taper" label="Taper Angle" value="0.0 deg" />
                <SectionRule />
                <Dropdown id="operation" label="Operation" value="New Body" icon="body" />
              </Fields>
              <DialogFooter>
                <svg width="24" height="24" viewBox="0 0 24 24"><circle cx="12" cy="12" r="12" fill="#000" /><path d="M12 4V8M9 11H13V19M9 19H16" stroke="#fff" strokeWidth="3" fill="none" /></svg>
                <Spacer />
                <DialogButton type="submit">OK</DialogButton>
                <DialogButton type="button">Cancel</DialogButton>
              </DialogFooter>
            </Dialog>
          </RightColumn>
        </Overlay>

        <DimensionText $x={1217} $y={834}>40.00</DimensionText>
        <Hint $x={1580} $y={830} role="tooltip">Specify distance, or select coplanar profiles/faces to modify the selection</Hint>
        <QuickValue $x={1494} $y={954}>
          <svg width="8" height="40" viewBox="0 0 8 40"><path d="M2 0V40M6 2V40" stroke="#d2d2d2" strokeWidth="2" strokeDasharray="3 3" /></svg>
          <QuickInput aria-label="Distance value" defaultValue="40" />
          <button aria-label="Value options"><Caret /></button>
        </QuickValue>

        <BottomBar>
          <CommentsPanel>
            <PanelTitle $left={0}>COMMENTS</PanelTitle>
            <RoundSign plus />
            <Spaced><Grip /></Spaced>
          </CommentsPanel>
          <NavBar>
            {navItems.map((n) => (
              <React.Fragment key={n.name}>
                <NavButton $gap={n.gap} aria-label={n.name}>
                  <svg width={n.name === 'Viewports' ? 30 : 32} height="32" viewBox={n.name === 'Viewports' ? '0 0 30 32' : '0 0 32 32'}>{navArt[n.name]}</svg>
                </NavButton>
                {n.menu !== undefined && <NavButton $gap={n.menu} aria-label={`${n.name} menu`}><Caret /></NavButton>}
              </React.Fragment>
            ))}
          </NavBar>
          <StatusText>1 Profile | Area : 5000.00 mm^2</StatusText>
        </BottomBar>
      </Canvas>
      <BottomEdge />
    </Shell>
  );
}
